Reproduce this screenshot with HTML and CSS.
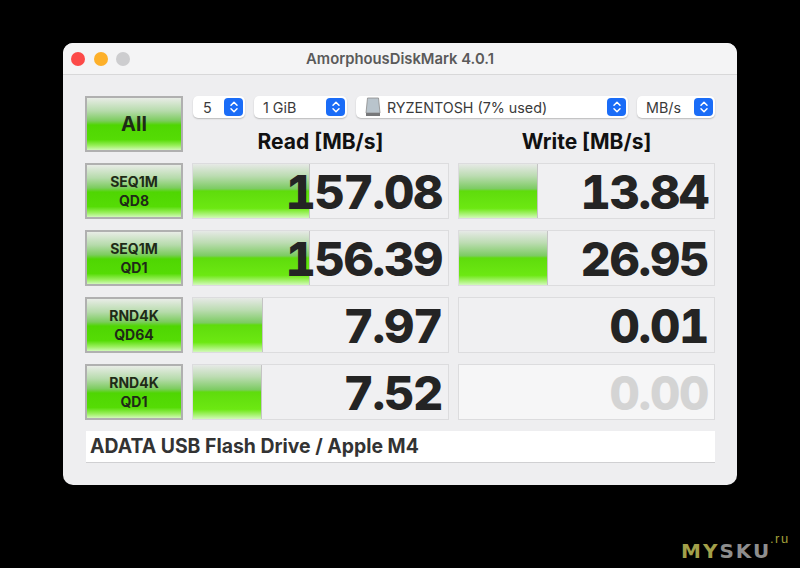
FILE: index.html
```html
<!DOCTYPE html>
<html lang="en">
<head>
  <meta charset="UTF-8">
  <title>AmorphousDiskMark 4.0.1</title>
  <link rel="stylesheet" href="styles.css">
</head>
<body>
  <div class="window">
    <div class="titlebar">
      <div class="lights">
        <span class="light red"></span>
        <span class="light amber"></span>
        <span class="light grey"></span>
      </div>
      <div class="title">AmorphousDiskMark 4.0.1</div>
    </div>

    <div class="content">
      <div class="board">
        <div class="btn btn-all">All</div>
        <div class="head">
          <div class="selects">
            <div class="select sel-count"><span class="sel-text">5</span><span class="stepper"><svg width="10" height="14" viewBox="0 0 10 14"><path d="M2 5.2 5 2.2 8 5.2M2 8.8 5 11.8 8 8.8" fill="none" stroke="#fff" stroke-width="1.5" stroke-linecap="round" stroke-linejoin="round"/></svg></span></div>
            <div class="select sel-size"><span class="sel-text">1 GiB</span><span class="stepper"><svg width="10" height="14" viewBox="0 0 10 14"><path d="M2 5.2 5 2.2 8 5.2M2 8.8 5 11.8 8 8.8" fill="none" stroke="#fff" stroke-width="1.5" stroke-linecap="round" stroke-linejoin="round"/></svg></span></div>
            <div class="select sel-disk">
              <svg class="disk" width="16" height="20" viewBox="0 0 16 20">
                <path d="M2.5 1H13.5L15 16H1Z" fill="#b9c4cc" stroke="#8c8c8c" stroke-width=".8"/>
                <rect x="1" y="16" width="14" height="3" fill="#77787a"/>
              </svg>
              <span class="sel-text">RYZENTOSH (7% used)</span><span class="stepper"><svg width="10" height="14" viewBox="0 0 10 14"><path d="M2 5.2 5 2.2 8 5.2M2 8.8 5 11.8 8 8.8" fill="none" stroke="#fff" stroke-width="1.5" stroke-linecap="round" stroke-linejoin="round"/></svg></span>
            </div>
            <div class="select sel-unit"><span class="sel-text">MB/s</span><span class="stepper"><svg width="10" height="14" viewBox="0 0 10 14"><path d="M2 5.2 5 2.2 8 5.2M2 8.8 5 11.8 8 8.8" fill="none" stroke="#fff" stroke-width="1.5" stroke-linecap="round" stroke-linejoin="round"/></svg></span></div>
          </div>
          <div class="columns">
            <div class="col-title">Read [MB/s]</div>
            <div class="col-title">Write [MB/s]</div>
          </div>
        </div>

        <div class="btn">SEQ1M<br>QD8</div>
        <div class="cell"><div class="fill" style="width: 46%"></div><span class="val">157.08</span></div>
        <div class="cell"><div class="fill" style="width: 31%"></div><span class="val">13.84</span></div>

        <div class="btn">SEQ1M<br>QD1</div>
        <div class="cell"><div class="fill" style="width: 46%"></div><span class="val">156.39</span></div>
        <div class="cell"><div class="fill" style="width: 35%"></div><span class="val">26.95</span></div>

        <div class="btn">RND4K<br>QD64</div>
        <div class="cell"><div class="fill" style="width: 27.5%"></div><span class="val">7.97</span></div>
        <div class="cell"><span class="val">0.01</span></div>

        <div class="btn">RND4K<br>QD1</div>
        <div class="cell"><div class="fill" style="width: 27%"></div><span class="val">7.52</span></div>
        <div class="cell cell-off"><span class="val">0.00</span></div>
      </div>

      <div class="status">ADATA USB Flash Drive / Apple M4</div>
    </div>
  </div>

  <div class="mark"><span class="mark-my">MY</span><span class="mark-sku">SKU</span><span class="mark-ru">.ru</span></div>
</body>
</html>
```

FILE: styles.css
```css
* {
  box-sizing: border-box;
  margin: 0;
  padding: 0;
}
html, body {
  height: 100%;
  overflow: hidden;
}
body {
  background-color: black;
  font-family: Inter, "Liberation Sans", sans-serif;
  padding: 43px 63px 0;
}
.window {
  width: 674px;
  height: 442px;
  background-color: #eeeef0;
  border-radius: 10px;
  overflow: hidden;
}
.titlebar {
  height: 32px;
  background-color: #f4f4f5;
  border-bottom: 1px solid #d8d8d9;
  display: flex;
  align-items: center;
  position: relative;
}
.lights {
  display: flex;
  gap: 8.5px;
  padding-left: 8px;
}
.light {
  width: 14px;
  height: 14px;
  border-radius: 50%;
}
.red { background-color: #fc4a48; }
.amber { background-color: #fdb02a; }
.grey { background-color: #cdcdcf; }
.title {
  position: absolute;
  left: 0;
  right: 0;
  text-align: center;
  font-size: 14.8px;
  font-weight: 600;
  color: #5a5a5a;
}
.content {
  padding: 21px 22px 0;
}
.board {
  display: grid;
  grid-template-columns: 98px 257px 257px;
  grid-template-rows: repeat(5, 56px);
  column-gap: 9px;
  row-gap: 11px;
}
.btn {
  border: 2px solid #b0b0b0;
  background: linear-gradient(#e8ece6 0%, #b6dbab 25%, #7ccc5e 44%, #4fd602 52%, #55dc05 80%, #9cf060 92%, #d0f8b8 100%);
  display: flex;
  align-items: center;
  justify-content: center;
  text-align: center;
  font-size: 14px;
  line-height: 19px;
  font-weight: 700;
  color: #1f2a17;
}
.btn-all {
  font-size: 20px;
}
.head {
  grid-column: 2 / 4;
  display: flex;
  flex-direction: column;
}
.selects {
  display: flex;
  gap: 9px;
  padding-left: 1px;
}
.select {
  height: 22px;
  background-color: white;
  border-radius: 5px;
  box-shadow: 0 1px 1.5px rgba(0, 0, 0, .22);
  display: flex;
  align-items: center;
  padding: 0 2px 0 9px;
  font-size: 14.3px;
  color: #3a3a3a;
}
.sel-text {
  flex: 1;
}
.sel-count { width: 52px; padding-left: 10px; }
.sel-size { width: 93px; }
.sel-disk { width: 272px; }
.sel-unit { width: 78px; }
.disk {
  margin-right: 6px;
}
.stepper {
  width: 19px;
  height: 18px;
  background-color: #1a6cf7;
  border-radius: 4px;
  display: flex;
  align-items: center;
  justify-content: center;
}
.columns {
  display: grid;
  grid-template-columns: 257px 257px;
  column-gap: 9px;
  padding-top: 12px;
}
.col-title {
  text-align: center;
  font-size: 21px;
  line-height: 24px;
  font-weight: 700;
  color: #111;
}
.cell {
  position: relative;
  border: 1px solid #dcdcde;
  background-color: #f0f0f2;
  display: flex;
  align-items: center;
  justify-content: flex-end;
  padding: 1px 6px 0 0;
}
.cell-off {
  background-color: #f6f6f7;
}
.fill {
  position: absolute;
  left: 0;
  top: 0;
  bottom: 0;
  border-right: 1px solid #c4c4c4;
  background: linear-gradient(#e6e9e6 0%, #bcdcb2 22%, #7ccb62 46%, #5fdc0c 50%, #6ce812 82%, #a4f26c 92%, #d2f9ba 100%);
}
.val {
  position: relative;
  font-size: 47px;
  font-weight: 800;
  font-variant-numeric: tabular-nums;
  letter-spacing: -1.3px;
  color: #242424;
}
.cell-off .val {
  color: #d4d4d4;
}
.status {
  margin-top: 11px;
  margin-left: 1px;
  height: 32px;
  padding: 0 0 2px 4px;
  background-color: white;
  border-bottom: 1px solid #d0d0d2;
  display: flex;
  align-items: center;
  font-size: 19.4px;
  font-weight: 700;
  color: #333;
}
.mark {
  position: absolute;
  left: 681px;
  top: 540px;
  font-family: "DejaVu Sans", sans-serif;
  font-size: 20px;
  line-height: 22px;
  font-weight: 700;
  letter-spacing: 2px;
}
.mark-my { color: #a3a04a; }
.mark-sku { color: #8e8e8e; }
.mark-ru {
  position: absolute;
  left: 89px;
  top: -12px;
  font-family: "Liberation Sans", sans-serif;
  font-size: 13px;
  font-weight: 400;
  letter-spacing: 1.5px;
  color: #a3a03a;
}
```
